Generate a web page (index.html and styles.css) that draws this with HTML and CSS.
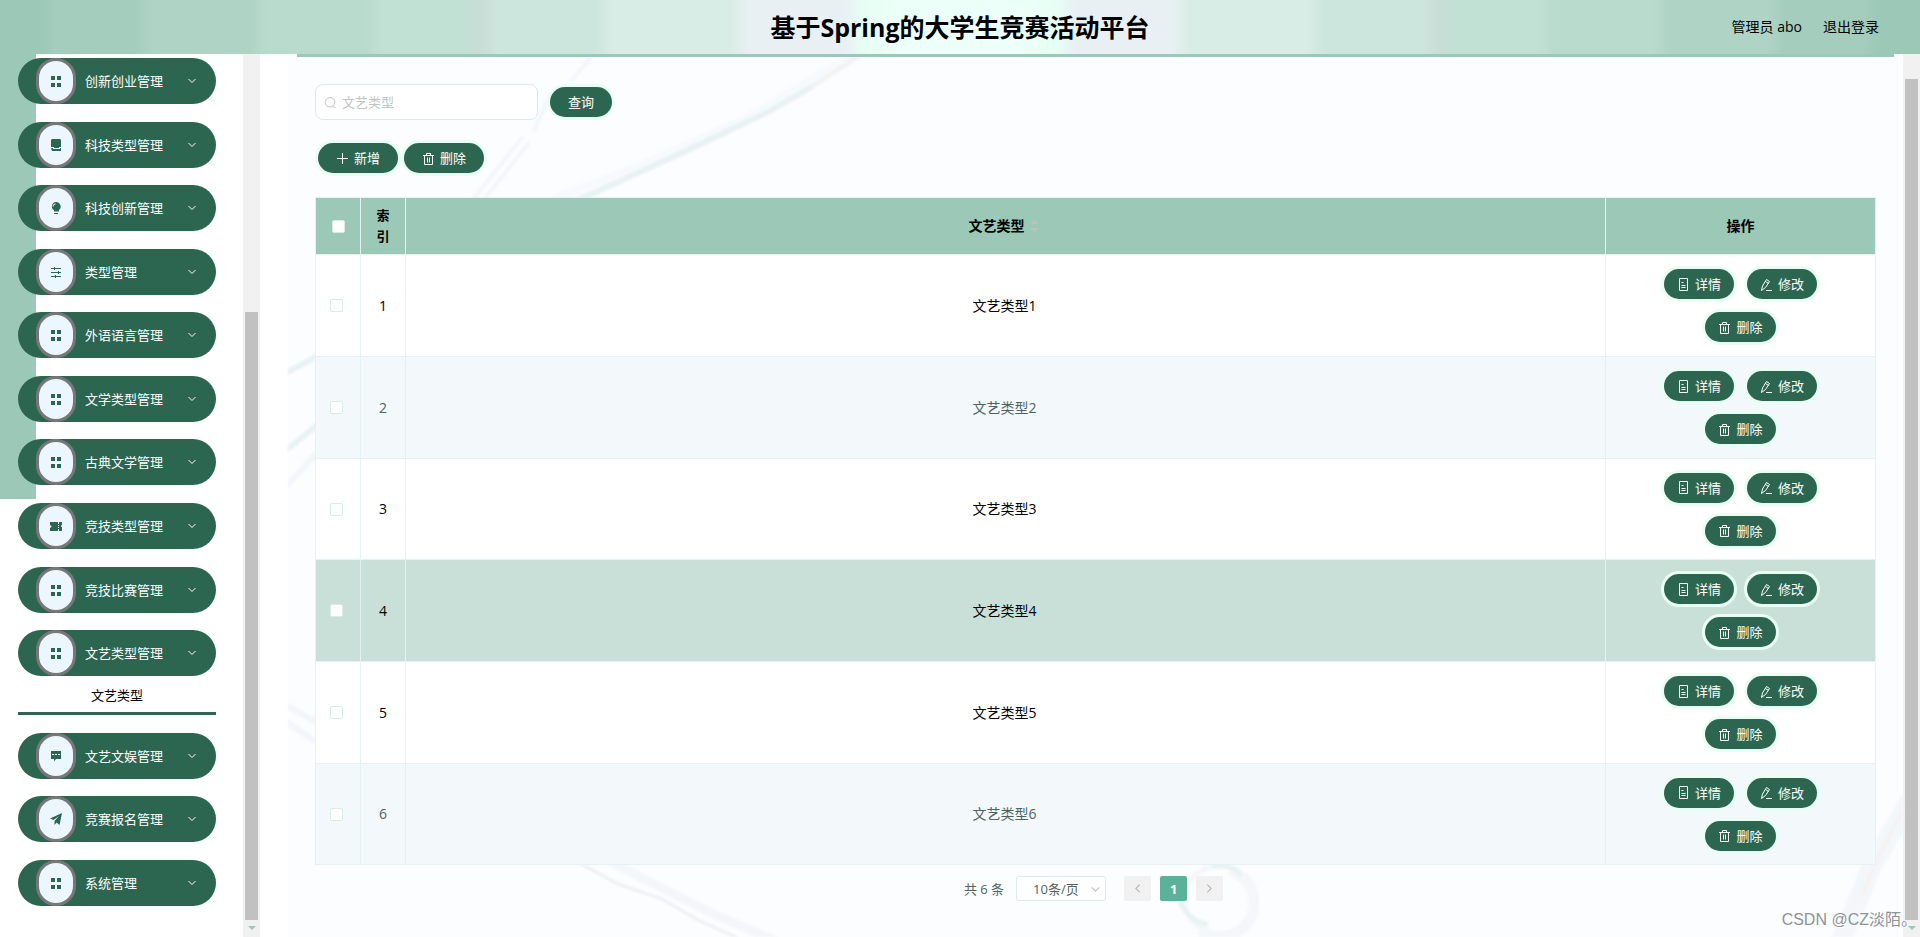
FILE: index.html
```html
<!DOCTYPE html>
<html lang="zh-CN">
<head>
<meta charset="utf-8">
<title>基于Spring的大学生竞赛活动平台</title>
<link rel="stylesheet" href="styles.css">
</head>
<body>
<svg class="symbols" aria-hidden="true">
  <symbol id="i-grid" viewBox="0 0 12 12"><path fill="currentColor" d="M1 1h4v4H1zM7 1h4v4H7zM1 8h4v4H1zM7 8h4v4H7z"/></symbol>
  <symbol id="i-book" viewBox="0 0 12 12"><path fill="currentColor" d="M2 0h8l1 1v7H9v1H4V8H1V1zM1 9h2v1h7V9h1v3H2z"/></symbol>
  <symbol id="i-bulb" viewBox="0 0 12 12"><path fill="currentColor" d="M6 0a4.500 4.500 0 0 1 3 8v1.500H4V8.300A4.500 4.500 0 0 1 6 0zM4 11h4v1H4z"/><path fill="none" stroke="#ecf6ff" d="M3 4.500A2.500 2.500 0 0 1 5.500 2"/></symbol>
  <symbol id="i-sliders" viewBox="0 0 12 12"><path fill="none" stroke="currentColor" d="M1 2.500h10M1 6.500h10M1 10.500h10M4.500 1v3M8.500 5v3M5.500 9v3"/></symbol>
  <symbol id="i-ticket" viewBox="0 0 12 12"><path fill="currentColor" d="M0 2h8v1h1V2h3v3l-1 .5v1l1 .5v4H9v-1H8v1H0V8l1.500-1v-1L0 5z"/><path stroke="#ecf6ff" stroke-dasharray="1 1" d="M8.500 3v7"/></symbol>
  <symbol id="i-chat" viewBox="0 0 12 12"><path fill="currentColor" d="M1 1h10v8H6l-2 2.500V9H1z"/><path stroke="#ecf6ff" stroke-dasharray="2 1" d="M2 4.500h8"/></symbol>
  <symbol id="i-send" viewBox="0 0 12 12"><path fill="currentColor" d="M12 0 0 5.500 3.500 7 9 3 4.500 8v4l2-2.500L9.500 12z"/></symbol>
  <symbol id="i-down" viewBox="0 0 12 12"><path fill="none" stroke="currentColor" d="M2.500 4 6 7.500 9.500 4"/></symbol>
  <symbol id="i-search" viewBox="0 0 13 13"><path fill="none" stroke="currentColor" d="M6 1.500a4.700 4.700 0 1 1 0 9.500 4.700 4.700 0 0 1 0-9.500M8.500 10.500l3 1"/></symbol>
  <symbol id="i-plus" viewBox="0 0 13 13"><path stroke="currentColor" d="M1 6.500h11M6.500 1v11"/></symbol>
  <symbol id="i-trash" viewBox="0 0 13 13"><path fill="none" stroke="currentColor" d="M1 3.500h11M2.500 3.500v9h8v-9M4.500 3V1.500h4V3M5.500 5.500v5M7.500 5.500v5"/></symbol>
  <symbol id="i-doc" viewBox="0 0 13 13"><path fill="none" stroke="currentColor" d="M2.500.5h8v12h-8zM4.500 4.500h2M4.500 7.500h4M4.500 9.500h4"/></symbol>
  <symbol id="i-edit" viewBox="0 0 13 13"><path fill="none" stroke="currentColor" d="M6.500 1.500 9.500 3.500 5.500 9.500 1.500 12.500 2.500 8zM5.500 3.500l3 2M6 12.500h6"/></symbol>
</svg>

<header class="topbar">
  <h1 class="topbar-title">基于Spring的大学生竞赛活动平台</h1>
  <nav class="topbar-user"><span>管理员 abo</span><a href="#">退出登录</a></nav>
</header>

<div class="layout">
  <nav class="sidebar" aria-label="菜单">
    <ul class="menu">
      <li><button class="menu-item"><span class="badge"><svg><use href="#i-grid"/></svg></span><span class="menu-text">创新创业管理</span><svg class="arrow"><use href="#i-down"/></svg></button></li>
      <li><button class="menu-item"><span class="badge"><svg><use href="#i-book"/></svg></span><span class="menu-text">科技类型管理</span><svg class="arrow"><use href="#i-down"/></svg></button></li>
      <li><button class="menu-item"><span class="badge"><svg><use href="#i-bulb"/></svg></span><span class="menu-text">科技创新管理</span><svg class="arrow"><use href="#i-down"/></svg></button></li>
      <li><button class="menu-item"><span class="badge"><svg><use href="#i-sliders"/></svg></span><span class="menu-text">类型管理</span><svg class="arrow"><use href="#i-down"/></svg></button></li>
      <li><button class="menu-item"><span class="badge"><svg><use href="#i-grid"/></svg></span><span class="menu-text">外语语言管理</span><svg class="arrow"><use href="#i-down"/></svg></button></li>
      <li><button class="menu-item"><span class="badge"><svg><use href="#i-grid"/></svg></span><span class="menu-text">文学类型管理</span><svg class="arrow"><use href="#i-down"/></svg></button></li>
      <li><button class="menu-item"><span class="badge"><svg><use href="#i-grid"/></svg></span><span class="menu-text">古典文学管理</span><svg class="arrow"><use href="#i-down"/></svg></button></li>
      <li><button class="menu-item"><span class="badge"><svg><use href="#i-ticket"/></svg></span><span class="menu-text">竞技类型管理</span><svg class="arrow"><use href="#i-down"/></svg></button></li>
      <li><button class="menu-item"><span class="badge"><svg><use href="#i-grid"/></svg></span><span class="menu-text">竞技比赛管理</span><svg class="arrow"><use href="#i-down"/></svg></button></li>
      <li><button class="menu-item" aria-expanded="true"><span class="badge"><svg><use href="#i-grid"/></svg></span><span class="menu-text">文艺类型管理</span><svg class="arrow"><use href="#i-down"/></svg></button><a class="submenu-link" href="#">文艺类型</a></li>
      <li><button class="menu-item"><span class="badge"><svg><use href="#i-chat"/></svg></span><span class="menu-text">文艺文娱管理</span><svg class="arrow"><use href="#i-down"/></svg></button></li>
      <li><button class="menu-item"><span class="badge"><svg><use href="#i-send"/></svg></span><span class="menu-text">竞赛报名管理</span><svg class="arrow"><use href="#i-down"/></svg></button></li>
      <li><button class="menu-item"><span class="badge"><svg><use href="#i-grid"/></svg></span><span class="menu-text">系统管理</span><svg class="arrow"><use href="#i-down"/></svg></button></li>
    </ul>
  </nav>
  <div class="scrollbar scrollbar-side"><span class="thumb"></span><span class="scroll-arrow"></span></div>

  <main class="content">
    <svg class="backdrop" viewBox="0 0 1615 883" preserveAspectRatio="none" aria-hidden="true">
      <g fill="none" stroke-linecap="round">
        <path stroke="#f7fafc" stroke-width="9" d="M560 4 455 66 352 112 270 143"/>
        <path stroke="#e9f2f3" stroke-width="6" d="M525 32 480 58 400 96 352 118 290 146"/>
        <path stroke="#f3f3f4" stroke-width="5" d="M574 0 525 32"/>
        <path stroke="#f2f6fa" stroke-width="4" d="M302 4 284 26M262 40 246 76M240 90 198 143M234 84 187 143"/>
        <path stroke="#e9f2f3" stroke-width="6" d="M-4 320 28 303M-4 398 28 372"/>
        <path stroke="#f2f6fa" stroke-width="6" d="M-4 435 28 400M-4 650 28 668M-4 666 28 688"/>
        <path stroke="#f3f7fa" stroke-width="9" d="M320 806 370 832 425 860 486 886"/>
        <path stroke="#eeeff1" stroke-width="3" d="M286 806 330 830 374 845 410 866 450 884"/>
        <path stroke="#f3f7fa" stroke-width="11" d="M916 880a36 34 0 0 0 50-36 36 34 0 0 0-20-26"/>
        <path stroke="#f5f6f7" stroke-width="5" d="M930 812a36 34 0 0 0-34 34q4 26 24 30"/>
        <path stroke="#e9f2f3" stroke-width="5" d="M926 812q18-2 26 8M892 848q8 18 26 22"/>
        <path stroke="#f3f7fa" stroke-width="20" d="M1624 744 1585 810 1554 884"/>
        <path stroke="#f4f3f4" stroke-width="5" d="M1615 756 1594 796 1574 840"/>
      </g>
    </svg>
    <form class="search" onsubmit="return false">
      <label class="search-box"><svg><use href="#i-search"/></svg><input type="text" placeholder="文艺类型" aria-label="文艺类型"></label>
      <button class="btn btn-wide">查询</button>
    </form>
    <div class="tools">
      <button class="btn btn-wide"><svg><use href="#i-plus"/></svg>新增</button>
      <button class="btn btn-wide"><svg><use href="#i-trash"/></svg>删除</button>
    </div>

    <table class="data">
      <colgroup><col class="col-small"><col class="col-small"><col><col class="col-actions"></colgroup>
      <thead>
        <tr><th><input type="checkbox" aria-label="全选"></th><th class="index-head">索引</th><th><span class="sortable">文艺类型<svg class="sort" viewBox="0 0 9 12"><path fill="#b9c4c0" d="M0 4 4.500 0 9 4zM0 8h9l-4.500 4z"/></svg></span></th><th>操作</th></tr>
      </thead>
      <tbody>
        <tr><td><input type="checkbox" aria-label="选择 1"></td><td>1</td><td class="name">文艺类型1</td><td><div class="actions"><button class="btn"><svg><use href="#i-doc"/></svg>详情</button><button class="btn"><svg><use href="#i-edit"/></svg>修改</button><button class="btn"><svg><use href="#i-trash"/></svg>删除</button></div></td></tr>
        <tr><td><input type="checkbox" aria-label="选择 2"></td><td>2</td><td class="name">文艺类型2</td><td><div class="actions"><button class="btn"><svg><use href="#i-doc"/></svg>详情</button><button class="btn"><svg><use href="#i-edit"/></svg>修改</button><button class="btn"><svg><use href="#i-trash"/></svg>删除</button></div></td></tr>
        <tr><td><input type="checkbox" aria-label="选择 3"></td><td>3</td><td class="name">文艺类型3</td><td><div class="actions"><button class="btn"><svg><use href="#i-doc"/></svg>详情</button><button class="btn"><svg><use href="#i-edit"/></svg>修改</button><button class="btn"><svg><use href="#i-trash"/></svg>删除</button></div></td></tr>
        <tr class="active"><td><input type="checkbox" aria-label="选择 4"></td><td>4</td><td class="name">文艺类型4</td><td><div class="actions"><button class="btn"><svg><use href="#i-doc"/></svg>详情</button><button class="btn"><svg><use href="#i-edit"/></svg>修改</button><button class="btn"><svg><use href="#i-trash"/></svg>删除</button></div></td></tr>
        <tr><td><input type="checkbox" aria-label="选择 5"></td><td>5</td><td class="name">文艺类型5</td><td><div class="actions"><button class="btn"><svg><use href="#i-doc"/></svg>详情</button><button class="btn"><svg><use href="#i-edit"/></svg>修改</button><button class="btn"><svg><use href="#i-trash"/></svg>删除</button></div></td></tr>
        <tr><td><input type="checkbox" aria-label="选择 6"></td><td>6</td><td class="name">文艺类型6</td><td><div class="actions"><button class="btn"><svg><use href="#i-doc"/></svg>详情</button><button class="btn"><svg><use href="#i-edit"/></svg>修改</button><button class="btn"><svg><use href="#i-trash"/></svg>删除</button></div></td></tr>
      </tbody>
    </table>

    <div class="pager">
      <span>共 6 条</span>
      <label class="page-size"><select aria-label="每页条数"><option>10条/页</option></select><svg><use href="#i-down"/></svg></label>
      <div class="pages">
        <button class="page prev" aria-label="上一页"><svg><use href="#i-down"/></svg></button>
        <button class="page current">1</button>
        <button class="page next" aria-label="下一页"><svg><use href="#i-down"/></svg></button>
      </div>
    </div>
  </main>
  <div class="scrollbar scrollbar-main"><span class="thumb"></span><span class="scroll-arrow"></span></div>
</div>
<div class="watermark">CSDN @CZ淡陌。</div>
</body>
</html>
```
FILE: styles.css
```css
:root {
  --green: #2d6650;
  --mint: #9bc8b7;
  --line: #e6f1f3;
  --pale: #d8ede5;
}

* { box-sizing: border-box; }

body {
  margin: 0;
  height: 100vh;
  display: flex;
  flex-direction: column;
  overflow: hidden;
  background: #fff;
  color: #000;
  font: 14px/20px "Open Sans", "Noto Sans CJK SC", sans-serif;
}

button, input, select { font: inherit; color: inherit; margin: 0; }
button { border: 0; cursor: pointer; }
a { color: inherit; text-decoration: none; }
svg { width: 13px; height: 13px; flex: none; }
.symbols { position: absolute; width: 0; height: 0; }

/* header */
.topbar {
  flex: none;
  height: 54px;
  display: grid;
  grid-template-columns: 1fr auto 1fr;
  align-items: center;
  padding: 0 41px;
  background: linear-gradient(90deg,
    #9bc8b7 2%, #a4cdbd 3%, #a4cdbd 7%, #afd4c6 8%, #afd4c6 13%, #b8dbcd 14%,
    #b8dbcd 19%, #c2e1d5 20%, #c2e1d5 24%, #c8ddd6 25%, #cde6dd 26%, #cde6dd 31%,
    #d8ede5 32%, #d8ede5 38%, #e8f0f4 39%, #e8f0f4 44%, #e6fff4 45%, #edfff9 47%,
    #edfff9 53%, #e6fff4 55%, #e8f0f4 56%, #e8f0f4 61%, #d8ede5 62%, #d8ede5 68%,
    #cde6dd 69%, #cde6dd 74%, #c8ddd6 75%, #c2e1d5 76%, #c2e1d5 80%, #b8dbcd 81%,
    #b8dbcd 86%, #afd4c6 87%, #afd4c6 92%, #a4cdbd 93%, #a4cdbd 97%, #9bc8b7 98%);
}
.topbar-title { grid-column: 2; margin: 0; font-size: 25px; line-height: 36px; font-weight: 700; }
.topbar-user { display: flex; justify-content: flex-end; gap: 21px; }

.layout { flex: 1; min-height: 0; display: flex; }

/* side menu */
.sidebar {
  flex: none;
  width: 243px;
  padding: 4px 27px 31px 18px;
  background: linear-gradient(var(--mint), var(--mint)) 0 0 / 36px 445px no-repeat;
}
.menu {
  height: 100%;
  margin: 0;
  padding: 0;
  list-style: none;
  display: flex;
  flex-direction: column;
  justify-content: space-between;
}
.menu-item {
  width: 100%;
  height: 46px;
  display: flex;
  align-items: center;
  padding: 0 18px;
  border-radius: 23px;
  background: var(--green);
  color: #fff;
  font-size: 13px;
  text-align: left;
}
.badge {
  flex: none;
  width: 40px;
  height: 46px;
  margin-right: 9px;
  display: grid;
  place-items: center;
  border: 3px solid #777;
  border-radius: 20px;
  background: #ecf6ff;
  color: var(--green);
}
.badge svg, .arrow { width: 12px; height: 12px; }
.menu-text { flex: 1; }
.submenu-link {
  display: block;
  padding: 9px 0 7px;
  border-bottom: 3px solid var(--green);
  font-size: 13px;
  text-align: center;
}

/* scroll bars */
.scrollbar {
  flex: none;
  width: 17px;
  display: flex;
  flex-direction: column;
  align-items: center;
  background: #f1f1f1;
}
.thumb { flex: 1; width: 13px; background: #c1c1c1; }
.scrollbar-side { padding-top: 258px; margin-right: 28px; }
.scrollbar-main { padding-top: 25px; }
.scroll-arrow {
  margin: 6px 0 7px;
  border: 4px solid transparent;
  border-bottom-width: 0;
  border-top-color: var(--mint);
}

/* content */
.content {
  position: relative;
  isolation: isolate;
  flex: 1;
  min-width: 0;
  padding: 30px 27px 0;
  background: #fcfdff;
}
.content::before {
  content: "";
  position: absolute;
  inset: 0 9px auto;
  height: 3px;
  background: var(--mint);
}
.backdrop { position: absolute; inset: 0; z-index: -1; width: 100%; height: 100%; filter: blur(1px); }

.search { display: flex; align-items: center; gap: 12px; }
.search-box {
  width: 223px;
  height: 36px;
  display: flex;
  align-items: center;
  gap: 5px;
  padding: 0 8px;
  border: 1px solid var(--pale);
  border-radius: 8px;
  background: #fff;
  color: #c0c4c4;
  font-size: 13px;
}
.search-box input { flex: 1; min-width: 0; padding: 0; border: 0; outline: 0; background: none; }
.search-box input::placeholder { color: #c0c4c4; }

.btn {
  height: 30px;
  display: inline-flex;
  align-items: center;
  justify-content: center;
  gap: 5px;
  padding: 0 13px;
  border-radius: 15px;
  background: var(--green);
  box-shadow: 0 0 0 3px #e9fff5;
  color: #fff;
  font-size: 13px;
}
.btn-wide { padding: 0 18px; }
.tools { display: flex; gap: 6px; margin: 23px 3px 24px; }

/* table */
.data {
  width: 100%;
  table-layout: fixed;
  border-collapse: collapse;
  text-align: center;
}
.col-small { width: 45px; }
.col-actions { width: 270px; }
.data th, .data td { padding: 0; border: 1px solid var(--line); }
.data th { height: 57px; background: var(--mint); font-weight: 700; }
.data .index-head { padding: 0 15px; line-height: 21px; font-size: 13px; }
.data td { height: 102px; background: #fff; }
.data tr:nth-child(3n) td { height: 101px; }
.data tr:nth-child(even) td { background: #f3f8fb; color: #4f6360; }
.data tr.active td { background: #c9e0d9; color: #000; }
.data .name { padding-right: 2px; }
.data input {
  appearance: none;
  display: block;
  width: 13px;
  height: 13px;
  margin: 0 auto;
  border: 1px solid var(--pale);
  border-radius: 2px;
  background: #fff;
}
.data td input { margin-left: 14px; }
.sortable { display: inline-flex; align-items: center; gap: 5px; padding-right: 4px; }
.sort { width: 9px; height: 12px; }
.actions { display: flex; flex-wrap: wrap; justify-content: center; gap: 13px; padding: 0 50px; }

/* pagination */
.pager {
  display: flex;
  align-items: center;
  justify-content: center;
  gap: 12px;
  margin-top: 11px;
  padding-right: 4px;
  color: #4f6360;
  font-size: 13px;
}
.page-size { position: relative; }
.page-size select {
  display: block;
  appearance: none;
  width: 90px;
  height: 25px;
  padding: 0 16px;
  border: 1px solid var(--pale);
  border-radius: 3px;
  background: #fff;
}
.page-size svg { position: absolute; right: 4px; top: 7px; color: #c0c4c4; pointer-events: none; }
.pages { display: flex; gap: 9px; margin-left: 6px; }
.page {
  width: 27px;
  height: 25px;
  display: grid;
  place-items: center;
  padding: 0;
  border-radius: 2px;
  background: #f1f1f1;
  color: #b4b8b8;
}
.page.current { background: #5cb199; color: #fff; font-weight: 700; }
.prev svg { transform: rotate(90deg); }
.next svg { transform: rotate(-90deg); }

.watermark {
  position: absolute;
  right: 3px;
  bottom: 5px;
  color: #8f9296;
  font: 16px/24px "Liberation Sans", "Noto Sans CJK SC", sans-serif;
  text-shadow: 1px 1px 0 #fff;
}
```
